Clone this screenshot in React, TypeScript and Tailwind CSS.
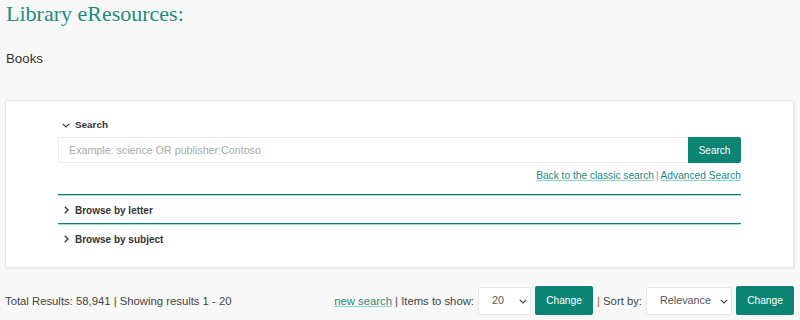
import React from "react";

function ChevronDown({ className = "" }: { className?: string }) {
  return (
    <svg className={className} width="8" height="5" viewBox="0 0 8 5" fill="none">
      <path d="M0.8 0.8 L4 4 L7.2 0.8" stroke="currentColor" strokeWidth="1.2" />
    </svg>
  );
}

function ChevronRight({ className = "" }: { className?: string }) {
  return (
    <svg className={className} width="5" height="8" viewBox="0 0 5 8" fill="none">
      <path d="M0.8 0.8 L4 4 L0.8 7.2" stroke="currentColor" strokeWidth="1.3" />
    </svg>
  );
}

function Select({ value, options, width, pl }: { value: string; options: string[]; width: string; pl: string }) {
  return (
    <div className={`relative ${width} h-[28px]`}>
      <select
        defaultValue={value}
        className={`h-full w-full appearance-none rounded-[2px] border border-[#e6e6e6] bg-white ${pl} text-[10.8px] text-[#555] outline-none`}
      >
        {options.map((o) => (
          <option key={o}>{o}</option>
        ))}
      </select>
      <ChevronDown className="pointer-events-none absolute right-[4px] top-[12px] text-[#444]" />
    </div>
  );
}

export default function App() {
  return (
    <div className="min-h-[320px] bg-[#f8f8f8] pl-[5px] pr-[6px] font-['Liberation_Sans',Arial,sans-serif] text-[#333]">
      <h1 className="pl-px pt-px font-['Liberation_Serif',serif] text-[22px] leading-[26px] text-[#1e8a7d]">
        Library eResources:
      </h1>
      <div className="mt-[22px] pl-px text-[13.3px] leading-[20px] text-[#333]">Books</div>

      <div className="mt-[31px] rounded-[2px] border border-[#e6e6e6] bg-white px-[52px] pb-[15px] pt-[16px] shadow-[1px_1px_2px_rgba(0,0,0,0.06)]">
        <div className="flex h-[16px] items-center">
          <span className="flex w-[17px] items-center pl-[4px] text-[#333]">
            <ChevronDown />
          </span>
          <span className="text-[9.9px] font-bold text-[#333]">Search</span>
        </div>

        <div className="mt-[4px] flex h-[26px]">
          <input
            className="h-full flex-1 rounded-l-[2px] border border-r-0 border-[#ececec] bg-white pl-[10px] text-[10.7px] text-[#333] outline-none placeholder:text-[#a9a9a9]"
            placeholder="Example: science OR publisher:Contoso"
          />
          <button className="h-full w-[53px] rounded-r-[2px] bg-[#0b8474] text-[10px] text-white">Search</button>
        </div>

        <div className="mt-[6px] flex h-[14px] items-center justify-end text-[10.2px] text-[#1b8a7c]">
          <a href="#" className="underline decoration-[#8fd0c6]">
            Back to the classic search
          </a>
          <span className="mx-[2px] text-[#999]">|</span>
          <a href="#" className="underline decoration-[#8fd0c6]">
            Advanced Search
          </a>
        </div>

        <div className="mt-[11px]">
          <div className="h-px bg-[#0f8070]" />
          <div className="h-px bg-[#a8dbd3]" />
        </div>
        <div className="flex h-[27px] items-center pt-px">
          <span className="flex w-[17px] items-center pl-[6px] text-[#333]">
            <ChevronRight />
          </span>
          <span className="text-[10px] font-bold text-[#333]">Browse by letter</span>
        </div>
        <div>
          <div className="h-px bg-[#0f8070]" />
          <div className="h-px bg-[#a8dbd3]" />
        </div>
        <div className="flex h-[27px] items-center pt-px">
          <span className="flex w-[17px] items-center pl-[6px] text-[#333]">
            <ChevronRight />
          </span>
          <span className="text-[10px] font-bold text-[#333]">Browse by subject</span>
        </div>
      </div>

      <div className="mt-[18px] flex items-center justify-between text-[11.3px] text-[#444]">
        <span className="pt-px">Total Results: 58,941 | Showing results 1 - 20</span>
        <div className="flex items-center gap-[4px]">
          <span className="pt-px">
            <a href="#" className="text-[#1b8a7c] underline decoration-[#8fd0c6]">
              new search
            </a>{" "}
            | Items to show:
          </span>
          <Select value="20" options={["10", "20", "50", "100"]} width="w-[53px]" pl="pl-[13px]" />
          <button className="h-[29px] w-[58px] rounded-[2px] bg-[#0b8474] text-[10.2px] text-white">Change</button>
          <span className="pt-px">
            <span className="text-[#a0603e]">|</span> Sort by:
          </span>
          <Select value="Relevance" options={["Relevance", "Title", "Date"]} width="w-[86px]" pl="pl-[13px]" />
          <button className="h-[29px] w-[58px] rounded-[2px] bg-[#0b8474] text-[10.2px] text-white">Change</button>
        </div>
      </div>
    </div>
  );
}
